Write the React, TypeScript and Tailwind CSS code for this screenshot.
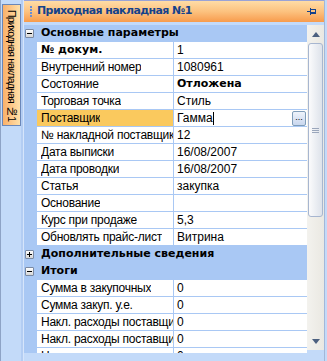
import React from "react";

type Row =
  | { kind: "section"; title: string; open: boolean }
  | { kind: "row"; label: string; value: string; boldLabel?: boolean; boldValue?: boolean; selected?: boolean };

const rows: Row[] = [
  { kind: "section", title: "Основные параметры", open: true },
  { kind: "row", label: "№ докум.", value: "1", boldLabel: true },
  { kind: "row", label: "Внутренний номер", value: "1080961" },
  { kind: "row", label: "Состояние", value: "Отложена", boldValue: true },
  { kind: "row", label: "Торговая точка", value: "Стиль" },
  { kind: "row", label: "Поставщик", value: "Гамма", selected: true },
  { kind: "row", label: "№ накладной поставщика", value: "12" },
  { kind: "row", label: "Дата выписки", value: "16/08/2007" },
  { kind: "row", label: "Дата проводки", value: "16/08/2007" },
  { kind: "row", label: "Статья", value: "закупка" },
  { kind: "row", label: "Основание", value: "" },
  { kind: "row", label: "Курс при продаже", value: "5,3" },
  { kind: "row", label: "Обновлять прайс-лист", value: "Витрина" },
  { kind: "section", title: "Дополнительные сведения", open: false },
  { kind: "section", title: "Итоги", open: true },
  { kind: "row", label: "Сумма в закупочных", value: "0" },
  { kind: "row", label: "Сумма закуп. у.е.", value: "0" },
  { kind: "row", label: "Накл. расходы поставщика", value: "0" },
  { kind: "row", label: "Накл. расходы поставщика", value: "0" },
  { kind: "row", label: "Накл. расходы поставщика", value: "0" },
];

const bold = { fontFamily: '"DejaVu Sans", sans-serif' };

function Expander({ open }: { open: boolean }) {
  return (
    <div className="relative w-[9px] h-[9px] border border-[#7b8aa3] bg-gradient-to-b from-[#ffffff] to-[#d6d6d6] rounded-[1px]">
      <div className="absolute left-[1px] top-[3px] w-[5px] h-[1px] bg-black" />
      {!open && <div className="absolute left-[3px] top-[1px] w-[1px] h-[5px] bg-black" />}
    </div>
  );
}

export default function App() {
  return (
    <div
      className="w-[327px] h-[361px] bg-[#c3daf9] flex overflow-hidden text-[12px] text-black"
      style={{ fontFamily: '"Liberation Sans", Arial, sans-serif' }}
    >
      {/* left tab strip */}
      <div className="w-[24px] h-full flex border-l border-[#8ea3c6]">
        <div className="w-[20px] pt-[4px] pl-[1px]">
          <div className="w-[19px] h-[122px] border border-[#6b87b8] bg-gradient-to-r from-[#fab06a] to-[#ffe0a8] flex justify-center pt-[5px] overflow-hidden">
            <span className="[writing-mode:vertical-rl] text-[10.5px] tracking-[-0.8px] leading-[17px] whitespace-nowrap shrink-0">
              Приходная накладная №1
            </span>
          </div>
        </div>
        <div className="w-[2px] bg-[#b3cdf3]" />
        <div className="w-[1px] bg-[#d6e5fb]" />
      </div>

      {/* panel */}
      <div className="w-[300px] h-full flex flex-col border-t border-[#9aa3d6]">
        {/* title */}
        <div className="h-[21px] bg-gradient-to-b from-[#ffdca6] via-[#fcc27f] to-[#f79b4b] flex items-center">
          <div className="w-[13px] flex flex-col items-center gap-[1px] pl-[1px]">
            {[0, 1, 2, 3].map((i) => (
              <div key={i} className="w-[2px] h-[2px] bg-[#6b8fd4]" />
            ))}
          </div>
          <span className="text-[11px] font-bold text-[#15428b] flex-1 tracking-[-0.6px]" style={bold}>
            Приходная накладная №1
          </span>
          <svg width="10" height="8" viewBox="0 0 10 8" className="mr-[7px]">
            <rect x="0" y="3" width="3" height="1" fill="#15428b" />
            <rect x="3" y="0" width="1" height="7" fill="#15428b" />
            <rect x="4" y="1" width="5" height="1" fill="#15428b" />
            <rect x="4" y="4" width="5" height="2" fill="#15428b" />
            <rect x="8" y="1" width="1" height="4" fill="#15428b" />
          </svg>
        </div>
        <div className="h-[3px]" />

        {/* grid + scrollbar */}
        <div className="h-[328px] flex">
          <div className="w-[283px] h-full overflow-hidden bg-white">
            {rows.map((r, i) =>
              r.kind === "section" ? (
                <div key={i} className="h-[17px] flex items-center bg-[#a9c8f4] border-b border-[#a9c8f4]">
                  <div className="w-[13px] flex items-center pl-[1px]">
                    <Expander open={r.open} />
                  </div>
                  <span className="pl-[4px] text-[11px] font-bold whitespace-nowrap" style={bold}>
                    {r.title}
                  </span>
                </div>
              ) : (
                <div key={i} className="h-[17px] flex">
                  <div className="w-[13px] h-full bg-[#a9c8f4]" />
                  <div
                    className={
                      "w-[137px] h-full border-b border-r border-[#a9c8f4] flex items-center pl-[4px] overflow-hidden whitespace-nowrap " +
                      (r.selected ? "bg-[#fac95e]" : "bg-white")
                    }
                  >
                    {r.boldLabel ? (
                      <span className="text-[11px] font-bold" style={bold}>
                        {r.label}
                      </span>
                    ) : (
                      <span className="min-w-0 overflow-hidden tracking-[-0.25px]">{r.label}</span>
                    )}
                  </div>
                  <div className="flex-1 h-full border-b border-[#a9c8f4] flex items-center pl-[3px] whitespace-nowrap overflow-hidden">
                    {r.boldValue ? (
                      <span className="text-[11px] font-bold" style={bold}>
                        {r.value}
                      </span>
                    ) : (
                      <span>{r.value}</span>
                    )}
                    {r.selected && (
                      <>
                        <div className="w-[1px] h-[13px] bg-black" />
                        <div className="flex-1" />
                        <div className="w-[14px] h-[15px] mr-[1px] border border-[#7f9db9] rounded-[2px] bg-gradient-to-b from-[#eef3fb] to-[#c9d7ee] flex items-end justify-center pb-[3px]">
                          <span className="text-[9px] leading-[9px] tracking-[0px]">...</span>
                        </div>
                      </>
                    )}
                  </div>
                </div>
              )
            )}
          </div>

          {/* scrollbar */}
          <div className="w-[17px] h-[325px] bg-gradient-to-r from-[#f3f2ee] to-[#eae8e2] flex flex-col items-center">
            <div className="h-[18px] flex items-center justify-center">
              <svg width="8" height="5" viewBox="0 0 8 5">
                <polygon points="0,5 8,5 4,0" fill="#4c607f" />
              </svg>
            </div>
            <div className="w-[15px] h-[174px] border border-[#a7b6d0] rounded-[3px] bg-gradient-to-r from-[#fbfbfc] to-[#dde2ea] flex flex-col items-center justify-center gap-[1px]">
              <div className="w-[7px] h-[1px] bg-[#9aa6bb]" />
              <div className="w-[7px] h-[1px] bg-[#9aa6bb]" />
              <div className="w-[7px] h-[1px] bg-[#9aa6bb]" />
            </div>
            <div className="flex-1" />
            <div className="h-[18px] flex items-center justify-center">
              <svg width="8" height="5" viewBox="0 0 8 5">
                <polygon points="0,0 8,0 4,5" fill="#4c607f" />
              </svg>
            </div>
          </div>
        </div>
      </div>
      <div className="w-[3px] h-full border-l border-[#a3b7d8]" />
    </div>
  );
}
